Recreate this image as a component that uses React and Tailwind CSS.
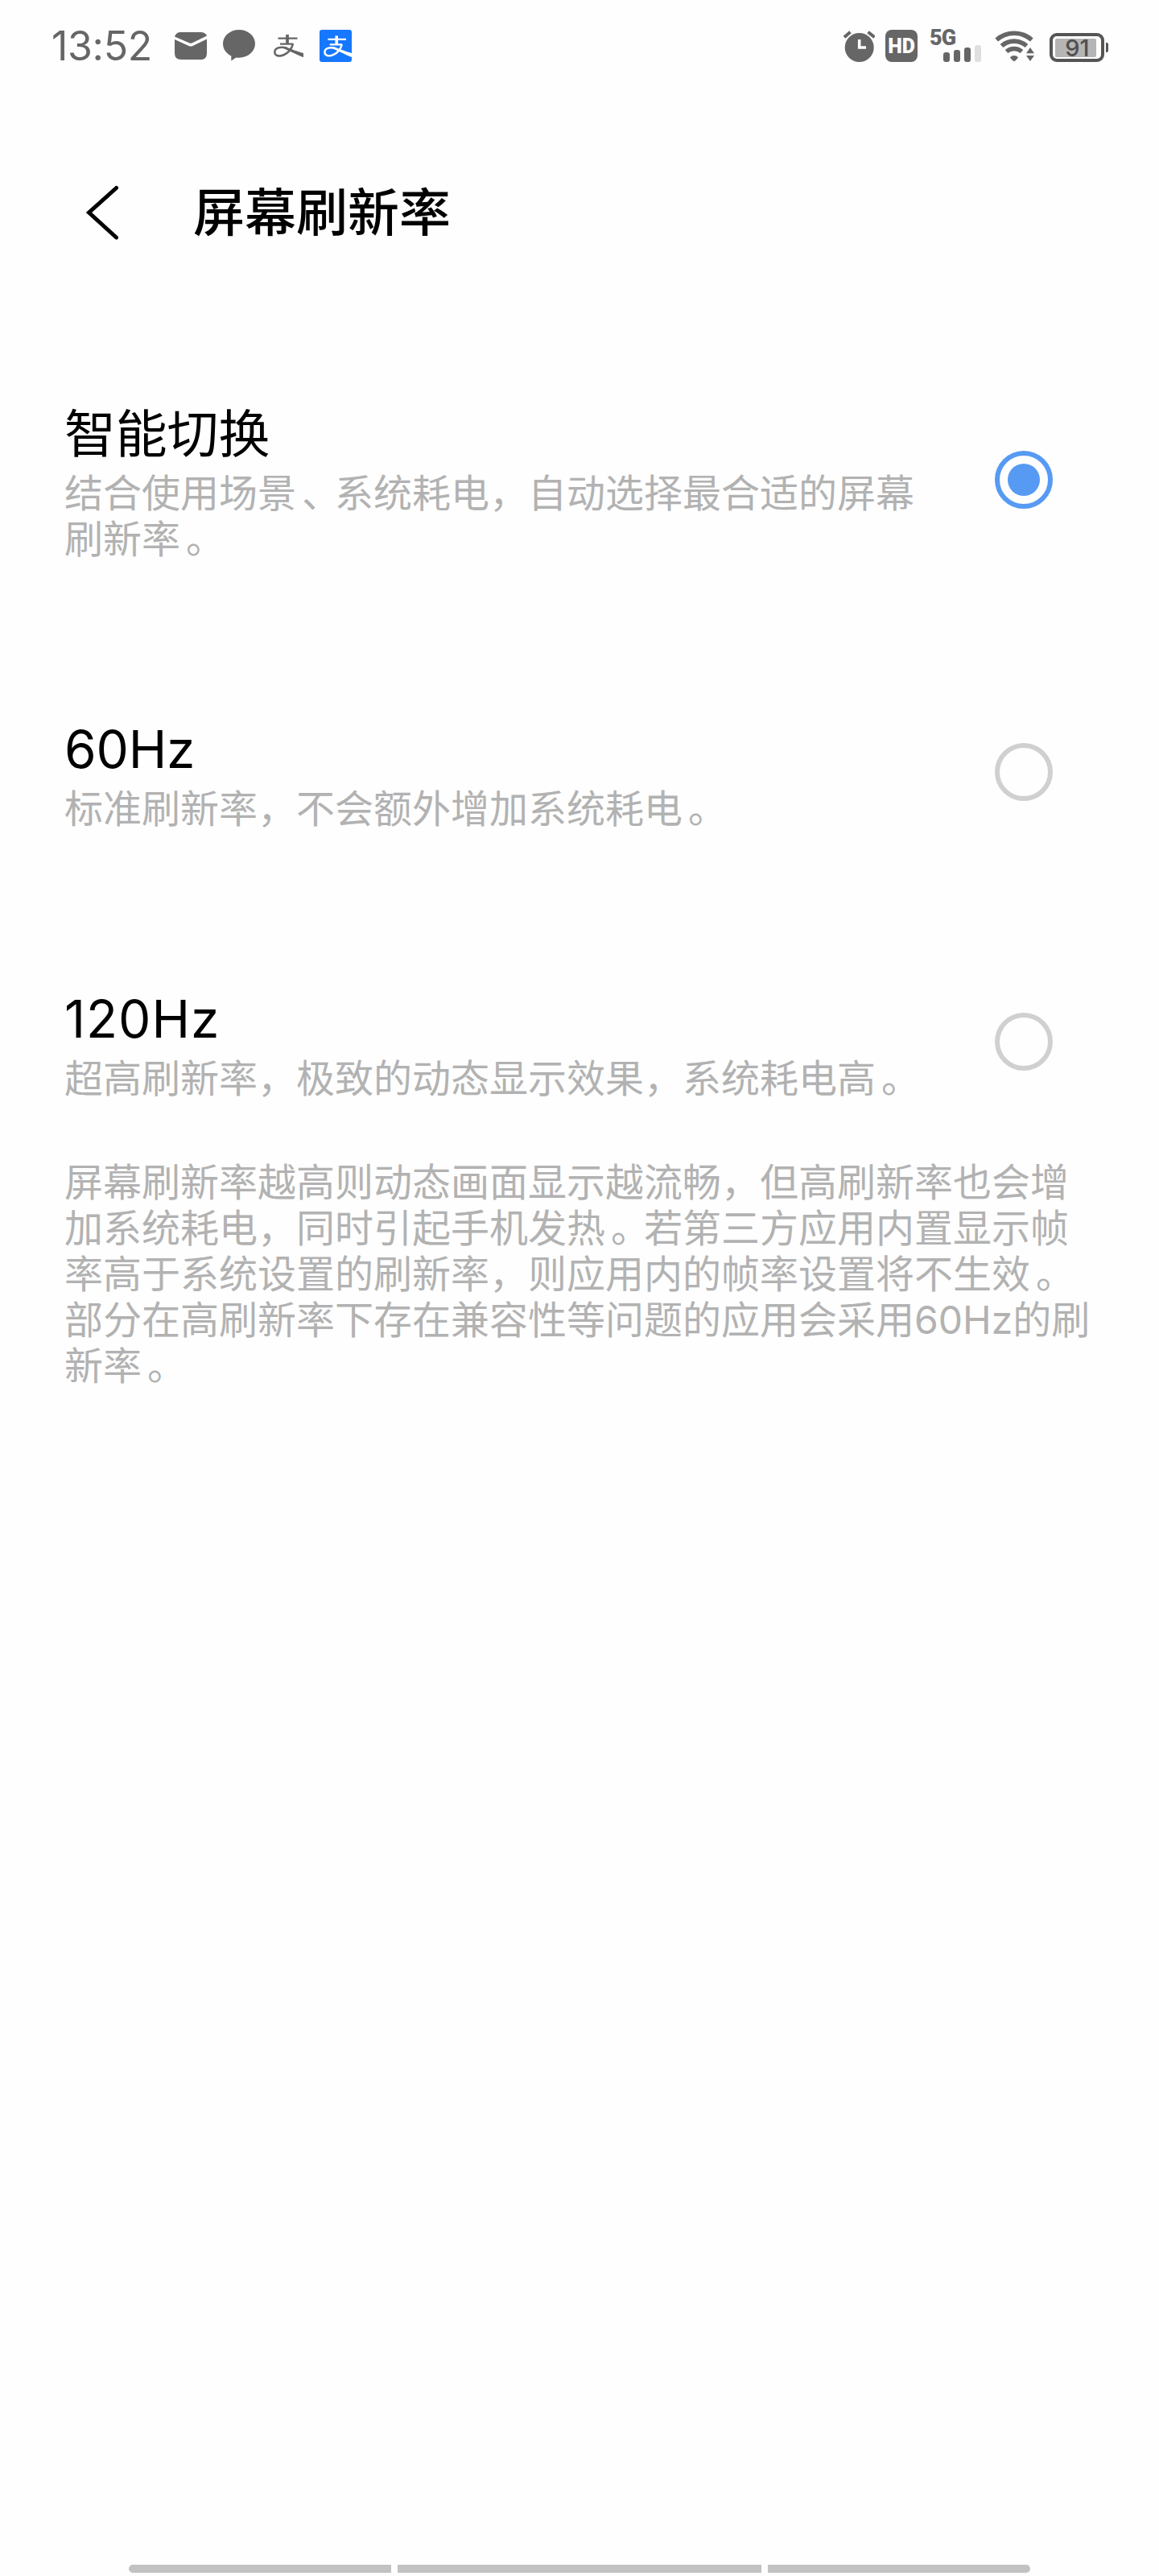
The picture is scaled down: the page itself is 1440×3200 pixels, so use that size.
const OPTIONS = [
  {
    title: '智能切换',
    lines: ['结合使用场景、系统耗电，自动选择最合适的屏幕', '刷新率。'],
    selected: true,
  },
  { title: '60Hz', lines: ['标准刷新率，不会额外增加系统耗电。'] },
  { title: '120Hz', lines: ['超高刷新率，极致的动态显示效果，系统耗电高。'], wide: true },
];

const NOTE = [
  '屏幕刷新率越高则动态画面显示越流畅，但高刷新率也会增',
  '加系统耗电，同时引起手机发热。若第三方应用内置显示帧',
  '率高于系统设置的刷新率，则应用内的帧率设置将不生效。',
  '部分在高刷新率下存在兼容性等问题的应用会采用60Hz的刷',
  '新率。',
];

// Sets full stops and enumeration commas slightly inward within their em box.
function Line({ text }) {
  return (
    <div>
      {text.split(/([。、])/).map((part, i) =>
        part === '。' || part === '、' ? (
          <span key={i} className="pr-[17px] pl-[7px] [font-feature-settings:'halt']">
            {part}
          </span>
        ) : (
          part
        ),
      )}
    </div>
  );
}

function MailIcon() {
  return (
    <svg className="h-10 w-10" viewBox="0 0 40 40" fill="#666">
      <path d="M0 8.500C1 5 3.500 3 7.500 3H32.500C36.500 3 39 5 40 7.500L21.500 16.500Q20 17.200 18.500 16.500Z" />
      <path d="M0 12L17.500 20Q20 21.200 22.500 20L40 11.500V29Q40 37 32 37H8Q0 37 0 29Z" />
    </svg>
  );
}

function BubbleIcon() {
  return (
    <svg className="h-10 w-10" viewBox="0 0 40 40" fill="#666">
      <path d="M20 0C31 0 40 7.600 40 17.300S31 34.700 20 34.700C18.700 34.700 17.500 34.600 16.300 34.500L10.300 38.500V32.500C4 29.500 0 24 0 17.300C0 7.600 9 0 20 0Z" />
    </svg>
  );
}

function AlipayMark({ color }) {
  return (
    <g fill="none" stroke={color} strokeLinecap="butt">
      <path strokeWidth="2.300" d="M8.500 10.700H32.500M11 17.700H27.500" />
      <path strokeWidth="3.800" d="M20 6V18" />
      <path
        strokeWidth="2.500"
        d="M27 17.700C25.500 23 21.500 28.500 16 31C9 34.300 4 31.500 4.300 27.300C4.800 22 12 20.500 20 23"
      />
      <path fill={color} stroke="none" d="M15 21C22 22 30 26.500 40 29V34.300C33 31.500 25 27.300 15 23Z" />
    </g>
  );
}

function AlarmIcon() {
  return (
    <svg className="h-10 w-10" viewBox="0 0 40 40">
      <circle cx="20.700" cy="22" r="18" fill="#666" />
      <path d="M2 9.300L9.500 2.700M31.500 2.700L39.500 9.300" stroke="#666" strokeWidth="4" />
      <path d="M20.700 12V22H29" fill="none" stroke="#fefefe" strokeWidth="3.600" />
    </svg>
  );
}

function SignalIcon() {
  return (
    <div className="flex h-10 w-16 flex-col justify-between">
      <span className="h-5 font-['Roboto'] text-[27px] leading-[20px] font-black tracking-[-1px]">5G</span>
      <div className="-mt-2 flex items-end justify-end gap-[5px]">
        <i className="h-3 w-2 rounded-[3px] bg-[#666]" />
        <i className="h-[15px] w-2 rounded-[3px] bg-[#666]" />
        <i className="h-[18px] w-2 rounded-[3px] bg-[#666]" />
        <i className="h-[21px] w-2 rounded-[3px] bg-[#dfdfdf]" />
      </div>
    </div>
  );
}

function WifiIcon() {
  return (
    <svg className="h-10 w-[50px]" viewBox="0 0 50 40">
      <g fill="none" stroke="#666" strokeWidth="5.600">
        <path d="M2.200 12.500A33 33 0 0 1 45.800 12.500" />
        <path d="M8.500 20A23.500 23.500 0 0 1 39.500 20" />
        <path d="M14.500 27A14.500 14.500 0 0 1 33.500 27" />
      </g>
      <path d="M18.800 34.300Q24 29.800 29.200 34.300L26 38Q24 40 22 38Z" fill="#666" />
      <path d="M34 40V27L44 17H50V40Z" fill="#fefefe" />
      <path d="M39 29.300L44 22L49 29.300ZM39 32H49L44 39Z" fill="#666" />
    </svg>
  );
}

function Battery() {
  return (
    <div className="mt-1 flex items-center gap-[2px]">
      <div className="flex h-9 w-[68px] rounded-[9px] border-4 border-[#555] p-[2.500px]">
        <div className="flex w-[51px] items-center justify-center rounded-[2px] bg-[#b5b5b5] pl-[5px] text-[29px] leading-none font-medium text-[#505050]">
          91
        </div>
      </div>
      <div className="h-3 w-[3px] rounded-r-[2px] bg-[#555]" />
    </div>
  );
}

function StatusBar() {
  return (
    <div className="flex h-[114px] items-center justify-between pr-[63px] pl-[64px] text-[#666]">
      <div className="flex items-center gap-5">
        <div className="w-[133px] text-[50px] leading-none tracking-[-0.300px] whitespace-nowrap">13:52</div>
        <MailIcon />
        <BubbleIcon />
        <svg className="h-10 w-10" viewBox="0 0 40 40">
          <AlipayMark color="#666" />
        </svg>
        <svg className="h-10 w-10" viewBox="0 0 40 40">
          <rect width="40" height="40" rx="3" fill="#1677ff" />
          <g transform="translate(2.400 1.800) scale(.94)">
            <AlipayMark color="#fff" />
          </g>
        </svg>
      </div>
      <div className="flex items-center">
        <AlarmIcon />
        <div className="ml-[13px] flex h-10 w-10 items-center justify-center rounded-lg bg-[#666] font-['Roboto'] text-[25px] leading-none font-black text-[#fefefe]">
          HD
        </div>
        <div className="ml-[15px]">
          <SignalIcon />
        </div>
        <div className="ml-[17px]">
          <WifiIcon />
        </div>
        <div className="ml-[18px]">
          <Battery />
        </div>
      </div>
    </div>
  );
}

function Radio({ selected }) {
  return selected ? (
    <div className="flex h-[72px] w-[72px] shrink-0 items-center justify-center rounded-full border-6 border-[#579af4]">
      <div className="h-10 w-10 rounded-full bg-[#579af4]" />
    </div>
  ) : (
    <div className="mb-px h-[72px] w-[72px] shrink-0 rounded-full border-6 border-[#d0d0d0]" />
  );
}

function Option({ title, lines, selected, wide }) {
  return (
    <div className="flex items-center justify-between pr-[132px] pl-20">
      <div>
        <div className={`text-[64px] leading-[90px] text-black ${wide ? 'tracking-[1px]' : 'tracking-[-0.200px]'}`}>
          {title}
        </div>
        <div className="text-[48px] leading-[57px] whitespace-nowrap text-[#b2b2b2]">
          {lines.map((line) => (
            <Line key={line} text={line} />
          ))}
        </div>
      </div>
      <Radio selected={selected} />
    </div>
  );
}

export default function App() {
  return (
    <div className="flex h-[3200px] w-[1440px] flex-col overflow-hidden bg-[#fefefe] font-['Inter','Noto_Sans_CJK_SC',sans-serif]">
      <StatusBar />
      <header className="flex h-[300px] items-center pl-[106px]">
        <svg className="h-[70px] w-[44px]" viewBox="0 0 44 70" fill="none" stroke="#000" strokeWidth="5" strokeLinecap="round">
          <path d="M38.500 4.500L4.500 35L38.500 66" />
        </svg>
        <h1 className="ml-[90px] text-[64px] leading-[90px] font-medium text-black">屏幕刷新率</h1>
      </header>
      <main className="flex flex-col pt-20">
        <div className="flex flex-col gap-[188px]">
          {OPTIONS.map((option) => (
            <Option key={option.title} {...option} />
          ))}
        </div>
        <div className="mt-[72px] pl-20 text-[48px] leading-[57px] whitespace-nowrap text-[#b2b2b2]">
          {NOTE.map((line) => (
            <Line key={line} text={line} />
          ))}
        </div>
      </main>
      <div className="mt-auto mb-1 flex justify-center gap-2">
        <div className="h-[10px] w-[326px] rounded-l-full bg-[#c2c2c2]" />
        <div className="h-[10px] w-[452px] bg-[#c2c2c2]" />
        <div className="h-[10px] w-[326px] rounded-r-full bg-[#c2c2c2]" />
      </div>
    </div>
  );
}
